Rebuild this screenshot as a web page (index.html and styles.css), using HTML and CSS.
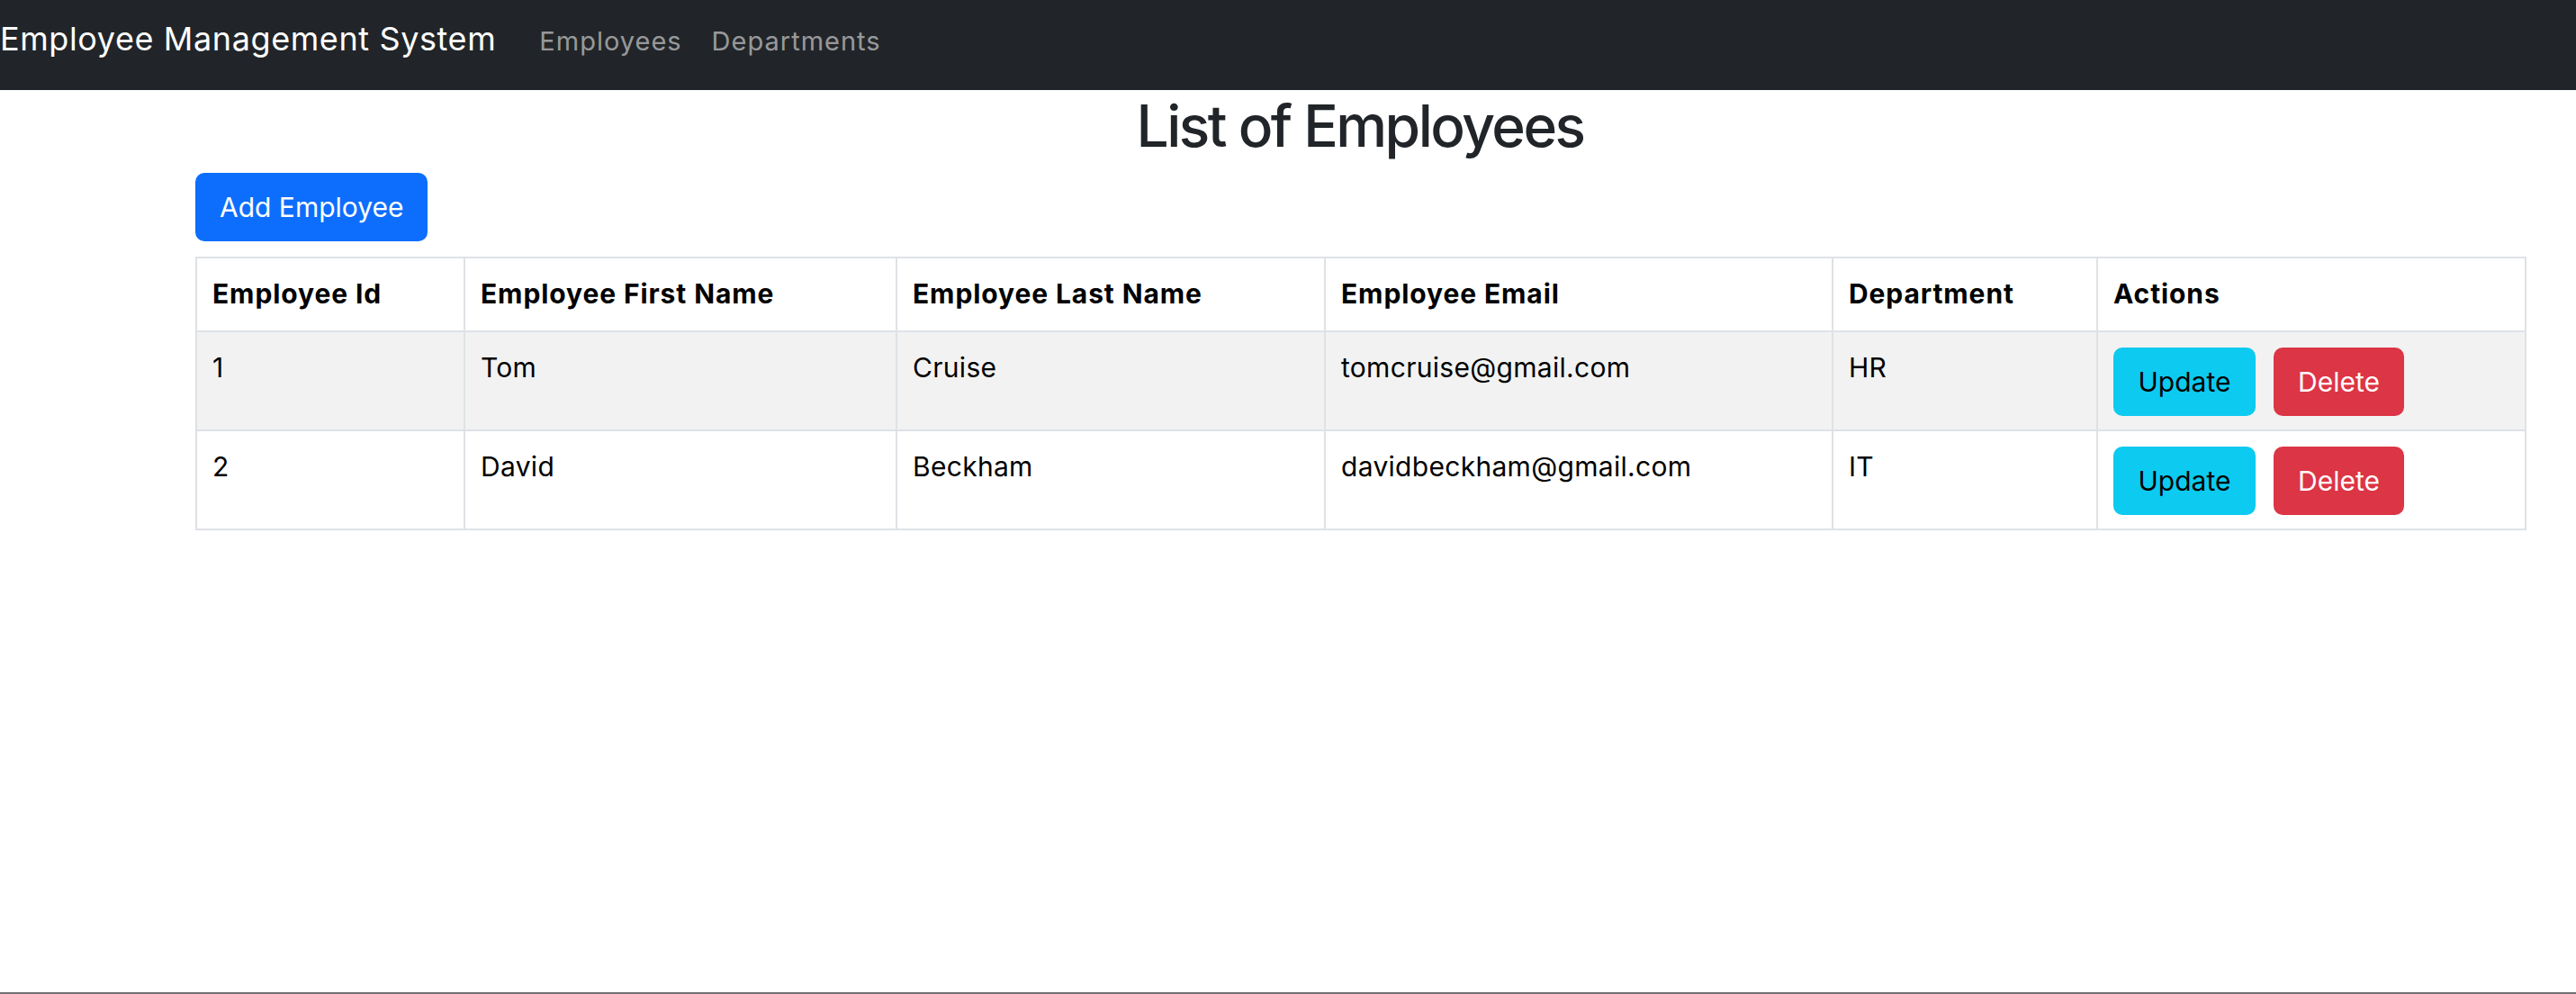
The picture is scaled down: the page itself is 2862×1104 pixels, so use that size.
FILE: index.html
```html
<!DOCTYPE html>
<html lang="en">
<head>
<meta charset="utf-8">
<title>Employee Management System</title>
<link rel="stylesheet" href="styles.css">
</head>
<body>
<nav class="navbar">
  <a class="brand" href="#">Employee Management System</a>
  <ul class="nav-links">
    <li><a href="#">Employees</a></li>
    <li><a href="#">Departments</a></li>
  </ul>
</nav>
<main class="container">
  <h2 class="title">List of Employees</h2>
  <div class="toolbar">
    <button class="btn btn-primary">Add Employee</button>
  </div>
  <table class="table">
    <colgroup>
      <col class="c-id"><col class="c-first"><col class="c-last"><col class="c-email"><col class="c-dept"><col class="c-actions">
    </colgroup>
    <thead>
      <tr>
        <th>Employee Id</th>
        <th>Employee First Name</th>
        <th>Employee Last Name</th>
        <th>Employee Email</th>
        <th>Department</th>
        <th>Actions</th>
      </tr>
    </thead>
    <tbody>
      <tr class="striped">
        <td>1</td>
        <td>Tom</td>
        <td>Cruise</td>
        <td>tomcruise@gmail.com</td>
        <td>HR</td>
        <td><button class="btn btn-info">Update</button><button class="btn btn-danger">Delete</button></td>
      </tr>
      <tr>
        <td>2</td>
        <td>David</td>
        <td>Beckham</td>
        <td>davidbeckham@gmail.com</td>
        <td>IT</td>
        <td><button class="btn btn-info">Update</button><button class="btn btn-danger">Delete</button></td>
      </tr>
    </tbody>
  </table>
</main>
<div class="spacer"></div>
<div class="window-edge"></div>
</body>
</html>
```
FILE: styles.css
```css
html, body {
  margin: 0;
  padding: 0;
}
body {
  height: 1104px;
  display: flex;
  flex-direction: column;
  background: #ffffff;
  font-family: Inter, "Noto Sans", "Liberation Sans", sans-serif;
  color: #212529;
}
.navbar {
  height: 100px;
  box-sizing: border-box;
  padding-top: 21px;
  flex: none;
  background: #212529;
  display: flex;
  align-items: baseline;
}
.brand {
  color: #ffffff;
  text-decoration: none;
  font-size: 36px;
  line-height: 44px;
  margin-right: 48px;
  letter-spacing: 0.6px;
}
.nav-links {
  list-style: none;
  margin: 0;
  padding: 0;
  display: flex;
  gap: 33px;
}
.nav-links a {
  color: rgba(255, 255, 255, 0.55);
  text-decoration: none;
  font-size: 29px;
  line-height: 40px;
  letter-spacing: 1px;
}
.container {
  margin-left: 217px;
  width: 2588px;
  flex: none;
}
.title {
  margin: 7px 0 20px;
  text-align: center;
  font-size: 64px;
  line-height: 65px;
  font-weight: 500;
  letter-spacing: -2.5px;
  color: #212529;
}
.toolbar {
  display: flex;
}
.btn {
  border: none;
  border-radius: 10px;
  font-family: inherit;
  font-size: 30px;
  height: 76px;
  cursor: pointer;
}
.btn-primary {
  background: #0d6efd;
  color: #ffffff;
  padding: 0 27px;
}
.btn-info {
  background: #0dcaf0;
  color: #000000;
  width: 158px;
  padding: 0;
}
.btn-danger {
  background: #dc3545;
  color: #ffffff;
  width: 145px;
  padding: 0;
  margin-left: 20px;
}
.table {
  margin-top: 17px;
  width: 2588px;
  table-layout: fixed;
  border-collapse: collapse;
  border: 2px solid #dee2e6;
  color: #000000;
  font-size: 30px;
  line-height: 45px;
  letter-spacing: 0.3px;
}
.c-id { width: 298px; }
.c-first { width: 480px; }
.c-last { width: 476px; }
.c-email { width: 564px; }
.c-dept { width: 294px; }
.c-actions { width: 476px; }
.table th,
.table td {
  border: 2px solid #dee2e6;
  padding: 17px 17px 15px;
  text-align: left;
  vertical-align: top;
}
.table th {
  font-weight: 700;
  letter-spacing: 0.9px;
  padding-top: 17px;
  padding-bottom: 18px;
}
.table tbody td {
  height: 76px;
}
.table td .btn {
  letter-spacing: 0;
}
.striped td {
  background: #f2f2f2;
}
.spacer {
  flex: 1;
}
.window-edge {
  height: 2px;
  flex: none;
  background: #6f7175;
}
```
